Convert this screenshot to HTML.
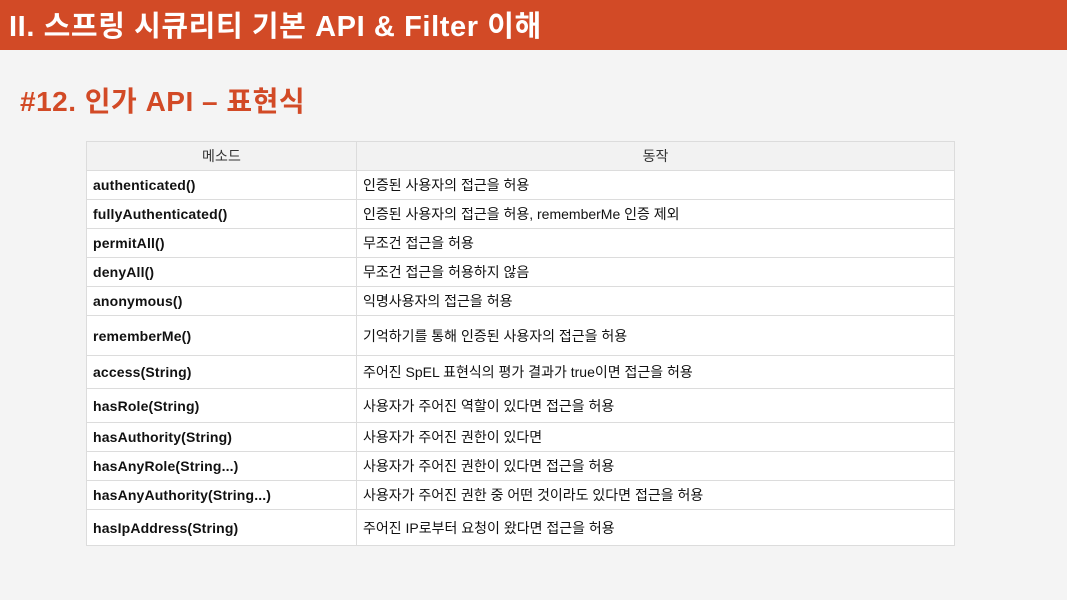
<!DOCTYPE html>
<html><head><meta charset="utf-8"><style>
body{margin:0;width:1067px;height:600px;background:#f4f4f4;font-family:"Liberation Sans","Noto Sans CJK KR",sans-serif;position:relative;overflow:hidden}
.bar{position:absolute;left:0;top:0;width:1067px;height:50px;background:#d24a26;color:#fff;font-weight:bold;font-size:29px;line-height:54px;padding-left:9px;box-sizing:border-box;white-space:nowrap;letter-spacing:0.6px}
.sub{position:absolute;left:20px;top:84px;color:#d24a26;font-weight:bold;font-size:28px;line-height:36px;letter-spacing:0.5px}
table{position:absolute;left:86px;top:141px;border-collapse:collapse;width:869px;font-size:14px;color:#111}
td{border:1px solid #dcdcdc;padding:0 6px;background:#fff}
td:first-child{width:257px;font-weight:bold;letter-spacing:0.15px}
tr.h td{background:#f2f2f2;text-align:center;font-weight:normal;color:#333}
</style></head><body>
<div class="bar">II. 스프링 시큐리티 기본 API &amp; Filter 이해</div>
<div class="sub">#12. 인가 API – 표현식</div>
<table>
<tr class="h" style="height:29px"><td>메소드</td><td>동작</td></tr>
<tr style="height:29px"><td>authenticated()</td><td>인증된 사용자의 접근을 허용</td></tr>
<tr style="height:29px"><td>fullyAuthenticated()</td><td>인증된 사용자의 접근을 허용, rememberMe 인증 제외</td></tr>
<tr style="height:29px"><td>permitAll()</td><td>무조건 접근을 허용</td></tr>
<tr style="height:29px"><td>denyAll()</td><td>무조건 접근을 허용하지 않음</td></tr>
<tr style="height:29px"><td>anonymous()</td><td>익명사용자의 접근을 허용</td></tr>
<tr style="height:40px"><td>rememberMe()</td><td>기억하기를 통해 인증된 사용자의 접근을 허용</td></tr>
<tr style="height:33px"><td>access(String)</td><td>주어진 SpEL 표현식의 평가 결과가 true이면 접근을 허용</td></tr>
<tr style="height:34px"><td>hasRole(String)</td><td>사용자가 주어진 역할이 있다면 접근을 허용</td></tr>
<tr style="height:29px"><td>hasAuthority(String)</td><td>사용자가 주어진 권한이 있다면</td></tr>
<tr style="height:29px"><td>hasAnyRole(String...)</td><td>사용자가 주어진 권한이 있다면 접근을 허용</td></tr>
<tr style="height:29px"><td>hasAnyAuthority(String...)</td><td>사용자가 주어진 권한 중 어떤 것이라도 있다면 접근을 허용</td></tr>
<tr style="height:36px"><td>hasIpAddress(String)</td><td>주어진 IP로부터 요청이 왔다면 접근을 허용</td></tr>
</table>
</body></html>
